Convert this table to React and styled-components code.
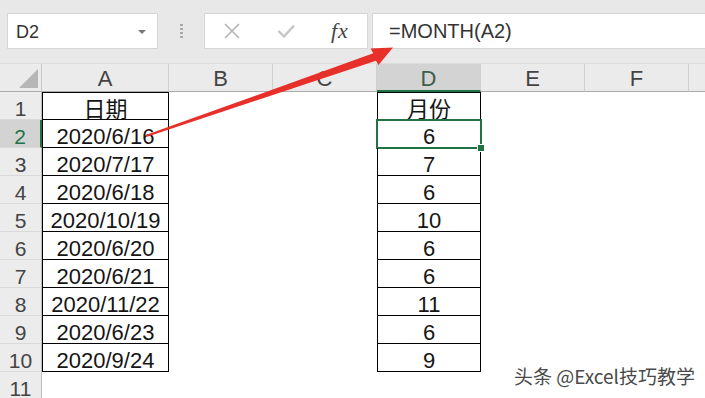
import React from 'react';
import styled, { createGlobalStyle } from 'styled-components';

const GlobalStyle = createGlobalStyle`
  html, body {
    margin: 0;
    padding: 0;
    background: #fff;
    overflow: hidden;
  }
`;

const GREEN = '#217346';
const columns = ['A', 'B', 'C', 'D', 'E', 'F', 'G'];
const dates = [
  '2020/6/16', '2020/7/17', '2020/6/18', '2020/10/19', '2020/6/20',
  '2020/6/21', '2020/11/22', '2020/6/23', '2020/9/24',
];

// =MONTH(A2) and down
const monthOf = (d) => Number(d.split('/')[1]);

const cellValue = (col, row) => {
  if (row > 10) return '';
  if (col === 'A') return row === 1 ? '日期' : dates[row - 2];
  if (col === 'D') return row === 1 ? '月份' : monthOf(dates[row - 2]);
  return '';
};

const App = () => {
  const rows = Array.from({ length: 11 }, (_, i) => i + 1);

  return (
    <Frame>
      <GlobalStyle />
      <Toolbar>
        <NameBox>
          D2
          <Caret />
        </NameBox>
        <Grip>
          <Dot /><Dot /><Dot /><Dot />
        </Grip>
        <FxBox>
          <svg width="18" height="16" viewBox="0 0 18 16">
            <path d="M2 1 L16 15 M16 1 L2 15" stroke="#b4b4b4" strokeWidth="1.6" fill="none" />
          </svg>
          <svg width="18" height="14" viewBox="0 0 18 14">
            <path d="M1.5 7 L7 12.5 L17 1.5" stroke="#c4c4c4" strokeWidth="2.4" fill="none" />
          </svg>
          <FxLabel>fx</FxLabel>
        </FxBox>
        <FormulaInput>=MONTH(A2)</FormulaInput>
      </Toolbar>

      <Sheet>
        <Corner>
          <CornerMark />
        </Corner>
        {columns.map((c) => (
          <ColHead key={c} $active={c === 'D'}>{c}</ColHead>
        ))}

        {rows.map((r) => (
          <React.Fragment key={r}>
            <RowHead $active={r === 2}>{r}</RowHead>
            {columns.map((c) => {
              const boxed = (c === 'A' || c === 'D') && r <= 10;
              return (
                <Cell
                  key={c + r}
                  $boxed={boxed}
                  $first={boxed && r === 1}
                  $selected={c === 'D' && r === 2}
                >
                  {cellValue(c, r)}
                </Cell>
              );
            })}
          </React.Fragment>
        ))}
      </Sheet>

      <Arrow viewBox="0 0 705 398" width="705" height="398">
        <polygon
          points="145.7,135.1 373.3,53.2 370.5,48.5 393,47.5 378.5,65 376,60.8 146.3,136.9"
          fill="#e8302a"
        />
      </Arrow>

      <Watermark>头条 @Excel技巧教学</Watermark>
    </Frame>
  );
};

export default App;

const Frame = styled.div`
  position: relative;
  width: 705px;
  height: 398px;
  overflow: hidden;
  background: #fff;
  font-family: "Liberation Sans", "Noto Sans CJK SC", sans-serif;
`;

const Toolbar = styled.div`
  display: flex;
  align-items: flex-start;
  box-sizing: border-box;
  height: 64px;
  padding: 13px 0 0 7px;
  background: #e8e8e8;
  border-bottom: 1px solid #dcdcdc;
`;

const NameBox = styled.div`
  display: flex;
  align-items: center;
  justify-content: space-between;
  box-sizing: border-box;
  width: 151px;
  height: 36px;
  padding: 2px 11px 0 8px;
  background: #fff;
  border: 1px solid #d6d6d6;
  font-size: 18px;
  color: #333;
`;

const Caret = styled.span`
  width: 0;
  height: 0;
  border-left: 4px solid transparent;
  border-right: 4px solid transparent;
  border-top: 4px solid #777;
`;

const Grip = styled.div`
  display: flex;
  flex-direction: column;
  align-items: center;
  justify-content: center;
  gap: 2px;
  width: 46px;
  height: 36px;
`;

const Dot = styled.span`
  width: 3px;
  height: 2px;
  background: #a8a8a8;
`;

const FxBox = styled.div`
  display: flex;
  align-items: center;
  gap: 36px;
  box-sizing: border-box;
  width: 164px;
  height: 36px;
  padding-left: 18px;
  background: #fff;
  border: 1px solid #d6d6d6;
`;

const FxLabel = styled.span`
  font-family: "Liberation Serif", serif;
  font-style: italic;
  font-size: 22px;
  color: #444;
  letter-spacing: 1px;
`;

const FormulaInput = styled.div`
  flex: 1;
  display: flex;
  align-items: center;
  box-sizing: border-box;
  height: 36px;
  margin-left: 4px;
  padding: 1px 0 0 16px;
  background: #fff;
  border: 1px solid #d6d6d6;
  border-right: none;
  font-size: 20px;
  color: #333;
`;

const Sheet = styled.div`
  display: grid;
  grid-template-columns: 42px 127px repeat(6, 104px);
  grid-template-rows: repeat(12, 28px);
`;

const Corner = styled.div`
  position: relative;
  box-sizing: border-box;
  background: #ebebeb;
  border-right: 1px solid #c8c8c8;
  border-bottom: 1px solid #ababab;
`;

const CornerMark = styled.div`
  position: absolute;
  right: 3px;
  bottom: 3px;
  width: 0;
  height: 0;
  border-left: 19px solid transparent;
  border-bottom: 19px solid #b6b6b6;
`;

const ColHead = styled.div`
  box-sizing: border-box;
  padding-top: 1px;
  text-align: center;
  font-size: 22px;
  line-height: 28px;
  color: ${(p) => (p.$active ? '#3c5e4c' : '#444')};
  background: ${(p) => (p.$active ? '#d3d3d3' : '#ebebeb')};
  border-right: 1px solid #cfcfcf;
  border-bottom: ${(p) => (p.$active ? `2px solid ${GREEN}` : '1px solid #ababab')};
`;

const RowHead = styled.div`
  box-sizing: border-box;
  padding-top: 3px;
  text-align: center;
  font-size: 21px;
  line-height: 28px;
  overflow: hidden;
  color: ${(p) => (p.$active ? GREEN : '#444')};
  background: ${(p) => (p.$active ? '#d3d3d3' : '#ececec')};
  border-right: ${(p) => (p.$active ? `2px solid ${GREEN}` : '1px solid #bdbdbd')};
  border-bottom: 1px solid #d9d9d9;
`;

const Cell = styled.div`
  position: relative;
  box-sizing: border-box;
  padding-top: 3px;
  text-align: center;
  font-size: 22px;
  line-height: 28px;
  color: #151515;
  white-space: nowrap;
  border-left: ${(p) => (p.$boxed ? '1px solid #000' : 'none')};
  border-right: ${(p) => (p.$boxed ? '1px solid #000' : 'none')};
  border-bottom: ${(p) => (p.$boxed ? '1px solid #000' : 'none')};
  border-top: ${(p) => (p.$first ? '1px solid #000' : 'none')};

  ${(p) =>
    p.$selected &&
    `
    &::after {
      content: "";
      position: absolute;
      top: -1px;
      left: -2px;
      right: -2px;
      bottom: -2px;
      border: 2px solid ${GREEN};
    }
    &::before {
      content: "";
      position: absolute;
      right: -5px;
      bottom: -5px;
      width: 6px;
      height: 6px;
      background: ${GREEN};
      border: 1px solid #fff;
      z-index: 1;
    }
  `}
`;

const Arrow = styled.svg`
  position: absolute;
  left: 0;
  top: 0;
  pointer-events: none;
`;

const Watermark = styled.div`
  position: absolute;
  right: 10px;
  bottom: 9px;
  font-family: "Noto Sans CJK SC", "Liberation Sans", sans-serif;
  font-size: 19px;
  color: #4a4a4a;
  text-shadow: 0 0 2px #fff, 0 0 2px #fff, 1px 1px 1px #fff;
`;
